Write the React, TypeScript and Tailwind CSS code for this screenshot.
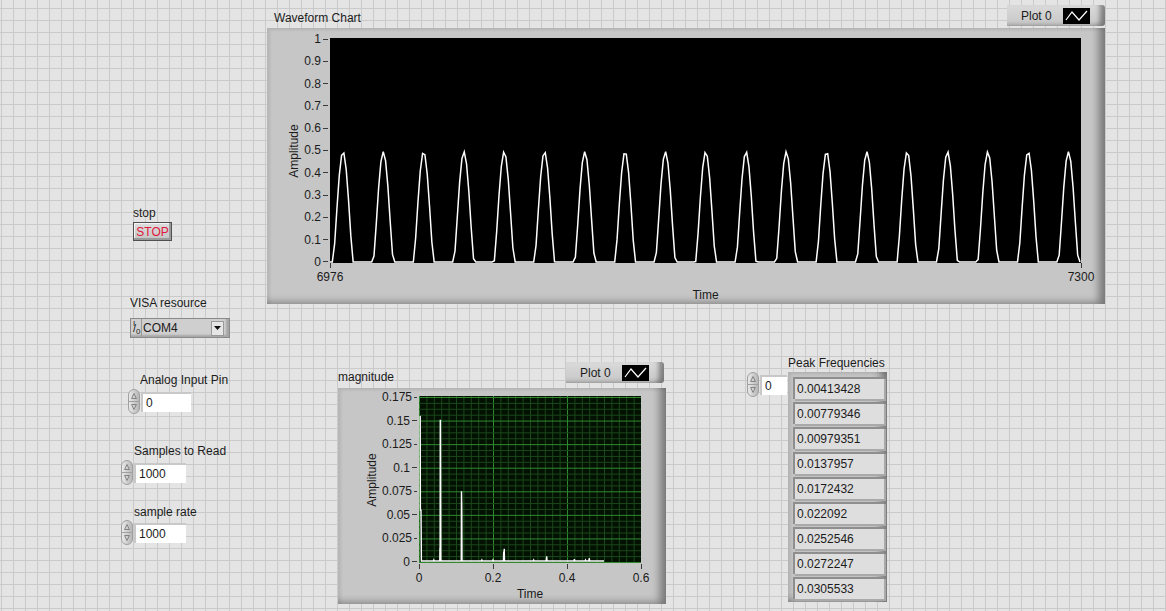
import React from 'react';

// LabVIEW style front panel: waveform chart, spectrum graph, controls

const wavePoints = (() => {
    const T = 17.41;
    const n0 = 5.62;
    const pts: string[] = [];
    for (let n = 0; n <= 324; n++) {
        const c = Math.max(0, Math.cos((2 * Math.PI * (n - n0)) / T));
        const v = 0.495 * Math.pow(c, 1.35);
        const x = (n * 750) / 324;
        const y = 224 - v * 223;
        pts.push(`${x.toFixed(2)},${y.toFixed(2)}`);
    }
    return pts.join(' ');
})();

// spectrum: [freq, magnitude]
const spectrum: [number, number][] = [
    [0.02, 0.001], [0.039, 0.001], [0.04, 0.002], [0.041, 0.001],
    [0.0562, 0.001], [0.0566, 0.015], [0.057, 0.001], [0.0575, 0.15], [0.0579, 0.15], [0.0584, 0.092], [0.059, 0.003], [0.06, 0.001],
    [0.08, 0.001], [0.1142, 0.001], [0.1148, 0.075], [0.1156, 0.057], [0.1162, 0.001], [0.15, 0.001],
    [0.169, 0.001], [0.17, 0.002], [0.171, 0.001], [0.199, 0.001], [0.2, 0.002], [0.201, 0.001],
    [0.2282, 0.001], [0.2288, 0.011], [0.2296, 0.001], [0.2304, 0.014], [0.231, 0.001], [0.28, 0.001],
    [0.309, 0.001], [0.31, 0.002], [0.311, 0.001], [0.344, 0.001], [0.345, 0.006], [0.3462, 0.001],
    [0.38, 0.001], [0.419, 0.001], [0.42, 0.003], [0.421, 0.001], [0.449, 0.001], [0.45, 0.002],
    [0.451, 0.001], [0.459, 0.001], [0.46, 0.004], [0.4612, 0.001], [0.48, 0.001], [0.5, 0.001],
];

const yOf = (v: number) => (166 - (v / 0.175) * 165).toFixed(2);

const specPoints = [
    `1.2,${yOf(0.155)}`,
    `1.4,${yOf(0.055)}`,
    `2,${yOf(0.055)}`,
    `2.4,${yOf(0.001)}`,
    ...spectrum.map(([f, v]) => `${(f * 370).toFixed(2)},${yOf(v)}`),
].join(' ');

const peaks = [
    '0.00413428',
    '0.00779346',
    '0.00979351',
    '0.0137957',
    '0.0172432',
    '0.022092',
    '0.0252546',
    '0.0272247',
    '0.0305533',
];

const frameBevel =
    'shadow-[inset_-9px_-4px_8px_-3px_rgba(0,0,0,0.4),inset_4px_3px_3px_-1px_rgba(0,0,0,0.08)]';

const Legend: React.FC = () => (
    <div className="w-[98px] h-[21px] flex items-center pl-[14px] rounded-r-[3px] bg-[linear-gradient(to_bottom,#dadada,#c6c6c6)] shadow-[inset_-7px_-2px_5px_-2px_rgba(0,0,0,0.4)]">
        <span className="w-[42px] leading-[14px]">Plot 0</span>
        <div className="w-[27px] h-[16px] bg-black">
            <svg width="27" height="16" viewBox="0 0 27 16">
                <polyline points="3,12 9,4 16,12 24,3" fill="none" stroke="white" strokeWidth="1.2" />
            </svg>
        </div>
    </div>
);

const Spinner: React.FC = () => (
    <svg width="12" height="25" viewBox="0 0 12 25" className="shrink-0">
        <defs>
            <linearGradient id="spin" x1="0" x2="1" y1="0" y2="0">
                <stop offset="0" stopColor="#ececec" />
                <stop offset="1" stopColor="#b4b4b4" />
            </linearGradient>
        </defs>
        <rect x="0.5" y="0.5" width="11" height="24" rx="5.5" fill="url(#spin)" stroke="#a0a0a0" />
        <line x1="1" y1="12.5" x2="11" y2="12.5" stroke="#a0a0a0" />
        <path d="M3.6 9.5 L6 4.5 L8.4 9.5 Z" fill="none" stroke="#707070" strokeWidth="0.8" />
        <path d="M3.6 15.5 L6 20.5 L8.4 15.5 Z" fill="none" stroke="#707070" strokeWidth="0.8" />
    </svg>
);

const NumBox: React.FC<{ value: string; className: string }> = ({ value, className }) => (
    <div className={`h-[20px] bg-white border-t-2 border-l-2 border-[#c8c8c8] flex items-center pl-[3px] ${className}`}>
        <span className="leading-[14px]">{value}</span>
    </div>
);

const YAxis: React.FC<{ labels: string[]; title: string; titleClass: string; labelClass: string; heightClass: string }> = ({
    labels,
    title,
    titleClass,
    labelClass,
    heightClass,
}) => (
    <>
        <div className={`${titleClass} ${heightClass} flex items-center justify-center`}>
            <span className="-rotate-90 whitespace-nowrap leading-[14px]">{title}</span>
        </div>
        <div className={`${labelClass} ${heightClass} flex flex-col justify-between py-[1px]`}>
            {labels.map((l) => (
                <div key={l} className="h-0 flex items-center justify-end">
                    <span className="leading-[14px] whitespace-nowrap">{l}</span>
                    <span className="w-[5px] h-px bg-[#3a3a3a] ml-[2px] mr-[2px]" />
                </div>
            ))}
        </div>
    </>
);

const XAxis: React.FC<{ labels: string[]; widthClass: string; offsetClass: string }> = ({ labels, widthClass, offsetClass }) => (
    <div className={`${offsetClass} ${widthClass} flex justify-between`}>
        {labels.map((l) => (
            <div key={l} className="w-0 flex flex-col items-center">
                <span className="w-px h-[5px] bg-[#3a3a3a] shrink-0" />
                <span className="mt-[2px] leading-[14px] whitespace-nowrap">{l}</span>
            </div>
        ))}
    </div>
);

const WaveformChart: React.FC = () => (
    <div className="absolute left-[267px] top-[10px] flex flex-col">
        <div className="pl-[7px] h-[18px] leading-[16px]">Waveform Chart</div>
        <div className={`w-[838px] h-[276px] bg-[#c6c6c6] pt-[10px] ${frameBevel}`}>
            <div className="flex">
                <YAxis
                    labels={['1', '0.9', '0.8', '0.7', '0.6', '0.5', '0.4', '0.3', '0.2', '0.1', '0']}
                    title="Amplitude"
                    titleClass="ml-[17px] w-[20px]"
                    labelClass="w-[26px]"
                    heightClass="h-[225px]"
                />
                <div className="w-[751px] h-[225px] bg-black">
                    <svg width="751" height="225" viewBox="0 0 751 225">
                        <polyline points={wavePoints} fill="none" stroke="white" strokeWidth="1.5" strokeLinejoin="miter" />
                    </svg>
                </div>
            </div>
            <XAxis labels={['6976', '7300']} widthClass="w-[751px]" offsetClass="ml-[63px]" />
            <div className="ml-[63px] w-[751px] text-center leading-[14px] mt-[4px]">Time</div>
        </div>
    </div>
);

const MagnitudeGraph: React.FC = () => {
    const vMinor = Array.from({ length: 31 }, (_, i) => i * 7.4);
    const hMinor = Array.from({ length: 29 }, (_, i) => 166 - i * (165 / 28));
    return (
        <div className="absolute left-[338px] top-[368px] flex flex-col">
            <div className="h-[20px] leading-[18px]">magnitude</div>
            <div className={`w-[328px] h-[216px] bg-[#c6c6c6] pt-[8px] ${frameBevel}`}>
                <div className="flex">
                    <YAxis
                        labels={['0.175', '0.15', '0.125', '0.1', '0.075', '0.05', '0.025', '0']}
                        title="Amplitude"
                        titleClass="ml-[24px] w-[20px]"
                        labelClass="w-[37px]"
                        heightClass="h-[167px]"
                    />
                    <div className="w-[222px] h-[167px] bg-[#031103]">
                        <svg width="222" height="167" viewBox="0 0 222 167">
                            {vMinor.map((x, i) => (
                                <line
                                    key={`v${i}`}
                                    x1={x + 0.5}
                                    x2={x + 0.5}
                                    y1="0"
                                    y2="167"
                                    stroke={i % 10 === 0 ? '#2f8a2f' : '#1b481b'}
                                    strokeWidth="1"
                                />
                            ))}
                            {hMinor.map((y, i) => (
                                <line
                                    key={`h${i}`}
                                    x1="0"
                                    x2="222"
                                    y1={y + 0.5}
                                    y2={y + 0.5}
                                    stroke={i % 4 === 0 ? '#2f8a2f' : '#1b481b'}
                                    strokeWidth="1"
                                />
                            ))}
                            <polyline points={specPoints} fill="none" stroke="white" strokeWidth="1.4" />
                        </svg>
                    </div>
                </div>
                <div className="mt-[1px]">
                    <XAxis labels={['0', '0.2', '0.4', '0.6']} widthClass="w-[222px]" offsetClass="ml-[81px]" />
                </div>
                <div className="ml-[81px] w-[222px] text-center leading-[14px] mt-[2px]">Time</div>
            </div>
        </div>
    );
};

const PeakFrequencies: React.FC = () => (
    <div className="absolute left-[747px] top-[355px] flex flex-col">
        <div className="pl-[41px] h-[17px] leading-[16px]">Peak Frequencies</div>
        <div className="flex items-start">
            <div className="flex items-center w-[41px]">
                <Spinner />
                <NumBox value="0" className="w-[27px] ml-[1px] mt-[1px]" />
            </div>
            <div className={`w-[99px] h-[230px] bg-[#c4c4c4] pl-[5px] pt-[5px] flex flex-col gap-[3px] ${frameBevel}`}>
                {peaks.map((p) => (
                    <div
                        key={p}
                        className="w-[91px] h-[22px] bg-[#dedede] border-l-2 border-t-2 border-[#8e8e8e] shadow-[2px_2px_0_#a9a9a9] flex items-center pl-[2px]"
                    >
                        <span className="leading-[14px]">{p}</span>
                    </div>
                ))}
            </div>
        </div>
    </div>
);

export default function App() {
    return (
        <div className="w-[1166px] h-[611px] relative overflow-hidden font-['Liberation_Sans',Arial,sans-serif] text-[12px] text-[#1b1b1b] bg-[#e4e4e4] bg-[linear-gradient(to_right,#cacaca_1px,transparent_1px),linear-gradient(to_bottom,#cacaca_1px,transparent_1px)] bg-[size:12px_12px] bg-[position:1px_8px]">
            <WaveformChart />
            <div className="absolute left-[1007px] top-[5px]">
                <Legend />
            </div>

            <MagnitudeGraph />
            <div className="absolute left-[566px] top-[362px]">
                <Legend />
            </div>

            <PeakFrequencies />

            {/* stop */}
            <div className="absolute left-[133px] top-[205px] flex flex-col">
                <div className="h-[17px] leading-[16px]">stop</div>
                <div className="w-[39px] h-[19px] bg-[linear-gradient(to_bottom,#dedede,#c4c4c4)] border border-[#505050] shadow-[inset_-2px_-2px_0_#9a9a9a,inset_1px_1px_0_#f4f4f4] flex items-center justify-center">
                    <span className="text-[#e0173c] leading-[14px]">STOP</span>
                </div>
            </div>

            {/* VISA resource */}
            <div className="absolute left-[130px] top-[295px] flex flex-col">
                <div className="h-[16px] leading-[16px]">VISA resource</div>
                <div className="mt-[7px] w-[100px] h-[20px] flex items-center bg-[#cfcfcf] border border-[#8a8a8a] shadow-[inset_-3px_-2px_2px_rgba(0,0,0,0.2)]">
                    <div className="w-[10px] h-[18px] relative shrink-0 text-[8px] leading-[8px]">
                        <span className="absolute left-[2px] top-[1px]">I</span>
                        <span className="absolute left-[2px] top-[4px] text-[11px] leading-[11px]">/</span>
                        <span className="absolute left-[5px] top-[9px]">0</span>
                    </div>
                    <div className="h-full flex items-center border-l border-[#9a9a9a] pl-[1px] flex-1">
                        <span className="leading-[14px]">COM4</span>
                    </div>
                    <div className="mr-[5px] w-[13px] h-[15px] bg-[#e6e6e6] border border-[#9a9a9a] flex items-center justify-center">
                        <svg width="7" height="4" viewBox="0 0 7 4">
                            <path d="M0 0 L7 0 L3.5 4 Z" fill="#111" />
                        </svg>
                    </div>
                </div>
            </div>

            {/* Analog Input Pin */}
            <div className="absolute left-[128px] top-[372px] flex flex-col">
                <div className="pl-[12px] h-[17px] leading-[16px]">Analog Input Pin</div>
                <div className="flex items-center">
                    <Spinner />
                    <NumBox value="0" className="w-[50px] ml-[1px]" />
                </div>
            </div>

            {/* Samples to Read */}
            <div className="absolute left-[121px] top-[443px] flex flex-col">
                <div className="pl-[13px] h-[17px] leading-[16px]">Samples to Read</div>
                <div className="flex items-center">
                    <Spinner />
                    <NumBox value="1000" className="w-[52px] ml-[1px]" />
                </div>
            </div>

            {/* sample rate */}
            <div className="absolute left-[121px] top-[504px] flex flex-col">
                <div className="pl-[13px] h-[16px] leading-[16px]">sample rate</div>
                <div className="flex items-center">
                    <Spinner />
                    <NumBox value="1000" className="w-[52px] ml-[1px]" />
                </div>
            </div>
        </div>
    );
}
